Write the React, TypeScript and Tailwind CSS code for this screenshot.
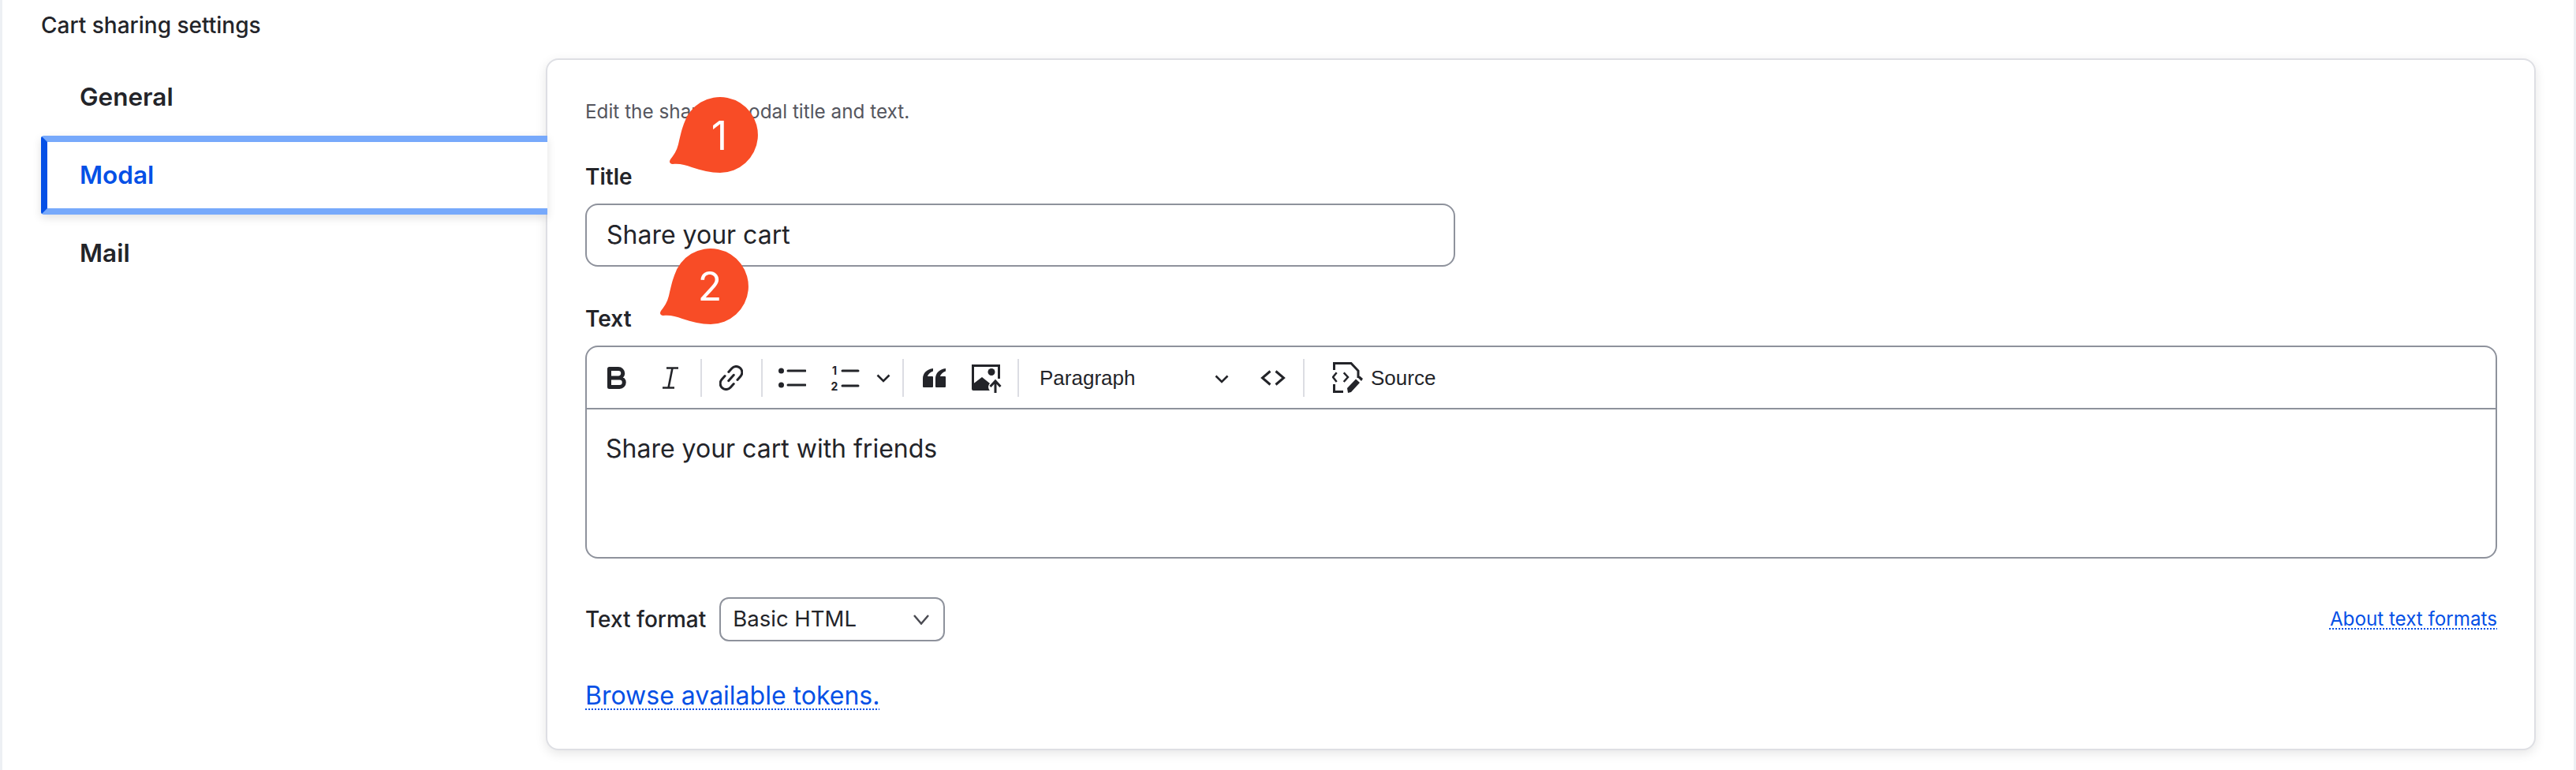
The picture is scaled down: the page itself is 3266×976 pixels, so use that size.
import React from "react";

const ink = "#232429";

function Sep({ ml }: { ml: string }) {
  return <div className={`w-[2px] h-[48px] bg-[#dcdde3] shrink-0 ${ml}`} />;
}

function Chevron({ className }: { className: string }) {
  return (
    <svg className={className} width="18" height="11" viewBox="0 0 18 11" fill="none" stroke={ink} strokeWidth="2.6">
      <path d="M1.5 1.5 L9 9 L16.5 1.5" />
    </svg>
  );
}

function Bubble({ n, className, digitClass }: { n: string; className: string; digitClass: string }) {
  return (
    <div className={`absolute w-[120px] h-[104px] ${className}`}>
      <svg width="120" height="104" viewBox="0 0 120 104" className="absolute inset-0">
        <path
          fill="#f84c26"
          d="M22 37 C18 48 17 55 15 63 C13 71 9 77 5 82 Q2 87 8 88 C16 87 24 89 32 92 C44 96 56 99 68 99 A48 48 0 1 0 22 37 Z"
        />
      </svg>
      <span className={`absolute w-[50px] text-center text-[50px] leading-[60px] text-white ${digitClass}`}>{n}</span>
    </div>
  );
}

export default function App() {
  return (
    <div
      className="relative min-h-[976px] border-x-[3px] border-[#edf0f4] bg-white text-[#232429] overflow-hidden"
      style={{ fontFamily: "Inter, sans-serif" }}
    >
      <div className="pl-[49px] pt-[14px] h-[74px] text-[28px] leading-[36px] font-medium">Cart sharing settings</div>

      <div className="flex pl-[49px] pr-[48px]">
        <div className="w-[640px] shrink-0 relative z-10 text-[31.5px] font-semibold">
          <div className="h-[98px] pl-[49px] flex items-center">General</div>
          <div className="h-[100px] -mr-[2px] pl-[41px] flex items-center text-[#0550e6] bg-white border-y-[8px] border-y-[#77a9fb] border-l-[8px] border-l-[#0550e6] rounded-l-[4px] shadow-[0_4px_12px_rgba(0,0,0,0.12)]">
            Modal
          </div>
          <div className="h-[98px] pl-[49px] flex items-center">Mail</div>
        </div>

        <div className="flex-1 bg-white border-2 border-[#dedfe4] rounded-[16px] shadow-[0_4px_14px_rgba(0,0,0,0.1)] pt-[47px] pl-[48px] pr-[47px] pb-[43px]">
          <div className="text-[24.3px] leading-[36px] text-[#55565e]">Edit the sharing modal title and text.</div>

          <div className="mt-[45px] text-[28px] leading-[40px] font-semibold">Title</div>
          <div className="mt-[14px] w-[1103px] h-[80px] border-2 border-[#8e929c] rounded-[16px] pl-[25px] flex items-center text-[32px]">
            Share your cart
          </div>

          <div className="mt-[46px] text-[28px] leading-[40px] font-semibold">Text</div>
          <div className="mt-[14px] h-[270px] border-2 border-[#8e929c] rounded-[16px]">
            <div className="h-[79px] border-b-2 border-[#8e929c] flex items-center">
              {/* Bold */}
              <svg className="ml-[26px] shrink-0" width="24" height="28" viewBox="0 0 24 28" fill="none" stroke={ink} strokeWidth="5" strokeLinejoin="round">
                <path d="M2.5 2.5 H14 a5.75 5.75 0 0 1 0 11.5 H2.5 Z M2.5 14 H15.5 a5.75 5.75 0 0 1 0 11.5 H2.5 Z" />
              </svg>
              {/* Italic */}
              <svg className="ml-[46px] shrink-0" width="20" height="28" viewBox="0 0 20 28" fill="none" stroke={ink} strokeWidth="2.6">
                <path d="M5 1.5 H20 M0 26.5 H15 M12.5 1.5 L7.5 26.5" />
              </svg>
              <Sep ml="ml-[28px]" />
              {/* Link */}
              <svg className="ml-[22px] shrink-0" width="30" height="32" viewBox="0 0 30 32" fill="none" stroke={ink} strokeWidth="3" strokeLinecap="round">
                <g transform="translate(15 16) rotate(42)">
                  <path d="M-7.5 -3.5 V-9.5 a7.5 7.5 0 0 1 15 0 V-3.5" />
                  <path d="M7.5 3.5 V9.5 a7.5 7.5 0 0 1 -15 0 V3.5" />
                  <path d="M0 -5 V5" />
                </g>
              </svg>
              <Sep ml="ml-[23px]" />
              {/* Bullets */}
              <svg className="ml-[17px] shrink-0" width="38" height="26" viewBox="0 0 38 26" fill={ink}>
                <circle cx="6.5" cy="4" r="3.5" />
                <circle cx="6.5" cy="22" r="3.5" />
                <path d="M15 4 H37 M15 22 H37" stroke={ink} strokeWidth="3" strokeLinecap="round" />
              </svg>
              {/* Numbered */}
              <svg className="ml-[28px] shrink-0" width="40" height="36" viewBox="0 0 40 36" fill={ink}>
                <text x="8" y="13.5" textAnchor="middle" fontSize="14" fontWeight="700" fontFamily="Inter, sans-serif">1</text>
                <text x="8" y="33.5" textAnchor="middle" fontSize="14" fontWeight="700" fontFamily="Inter, sans-serif">2</text>
                <path d="M18 9 H38 M18 28 H38" stroke={ink} strokeWidth="3" strokeLinecap="round" />
              </svg>
              <Chevron className="ml-[21px] mt-[2px] shrink-0" />
              <Sep ml="ml-[15px]" />
              {/* Quote */}
              <svg className="ml-[24px] shrink-0" width="29" height="24" viewBox="0 0 29 24" fill={ink}>
                <path d="M1 24 a1 1 0 0 1 -1 -1 V13 C0 6 5 1 13 0 V3.5 C9 5 6.5 7.5 6 10 H12 a1 1 0 0 1 1 1 V23 a1 1 0 0 1 -1 1 Z" />
                <path transform="translate(16 0)" d="M1 24 a1 1 0 0 1 -1 -1 V13 C0 6 5 1 13 0 V3.5 C9 5 6.5 7.5 6 10 H12 a1 1 0 0 1 1 1 V23 a1 1 0 0 1 -1 1 Z" />
              </svg>
              {/* Image upload */}
              <svg className="ml-[33px] mt-[4px] shrink-0" width="40" height="37" viewBox="0 0 40 37" fill="none">
                <path d="M34.5 18 V1.5 H1.5 V28" stroke={ink} strokeWidth="3" />
                <circle cx="25" cy="9.5" r="4.5" fill={ink} />
                <path d="M0 26 L13 16 L23 24 C20 27 21 31 23 33 H2 a2 2 0 0 1 -2 -2 Z" fill={ink} />
                <path d="M30 36 V21 M23.5 28 L30 21 L36.5 28" stroke={ink} strokeWidth="3" />
              </svg>
              <Sep ml="ml-[18px]" />
              {/* Paragraph dropdown */}
              <div className="ml-[26px] w-[240px] shrink-0 flex items-center justify-between" style={{ fontFamily: '"Liberation Sans", sans-serif' }}>
                <span className="text-[26px] leading-[32px]">Paragraph</span>
                <Chevron className="mt-[3px]" />
              </div>
              {/* Code */}
              <svg className="ml-[40px] shrink-0" width="32" height="20" viewBox="0 0 32 20" fill="none" stroke={ink} strokeWidth="3">
                <path d="M12.5 1.5 L2.5 10 L12.5 18.5 M19.5 1.5 L29.5 10 L19.5 18.5" />
              </svg>
              <Sep ml="ml-[22px]" />
              {/* Source */}
              <svg className="ml-[35px] shrink-0" width="40" height="40" viewBox="0 0 40 40" fill="none">
                <path d="M2.5 10 V1.5 H24 L33 11 V20 M2.5 28 V37.5 H14" stroke={ink} strokeWidth="3" />
                <path d="M5.7 13.3 L1 19 L5.7 25 M14.7 13.3 L20 19 L14.7 25" stroke={ink} strokeWidth="2.5" />
                <path d="M20 39 L19 33 L30 21.5 L35 26 L24 38 Z M32.5 19.5 L35 17.5 L39 21 L37 24 Z" fill={ink} />
              </svg>
              <span className="ml-[9px] text-[26px] leading-[32px]" style={{ fontFamily: '"Liberation Sans", sans-serif' }}>Source</span>
            </div>
            <div className="pt-[26px] pl-[24px] text-[32px] leading-[48px]">Share your cart with friends</div>
          </div>

          <div className="mt-[49px] flex items-center justify-between">
            <div className="flex items-center">
              <span className="text-[28px] font-medium">Text format</span>
              <div className="ml-[17px] w-[286px] h-[56px] border-2 border-[#8e929c] rounded-[12px] pl-[15px] pr-[18px] flex items-center justify-between text-[27.5px]">
                <span>Basic HTML</span>
                <svg width="20" height="13" viewBox="0 0 20 13" fill="none" stroke="#4a4b52" strokeWidth="2.5">
                  <path d="M1 1 L10 11.5 L19 1" />
                </svg>
              </div>
            </div>
            <a className="text-[24.2px] text-[#0550e6] underline decoration-dotted decoration-2 underline-offset-[4px] [text-decoration-skip-ink:none]">About text formats</a>
          </div>

          <div className="mt-[45px] text-[32px] leading-[48px]">
            <a className="text-[#0550e6] underline decoration-dotted decoration-2 underline-offset-[5px] [text-decoration-skip-ink:none]">Browse available tokens.</a>
          </div>
        </div>
      </div>

      <Bubble n="1" className="left-[842px] top-[120px]" digitClass="left-[42px] top-[22px]" />
      <Bubble n="2" className="left-[830px] top-[312px]" digitClass="left-[42px] top-[21px]" />
    </div>
  );
}
